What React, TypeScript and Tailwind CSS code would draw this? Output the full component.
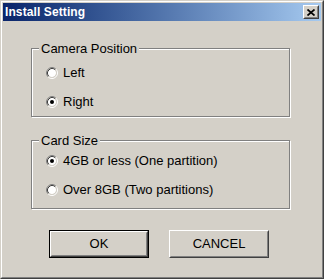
import React, { useState } from 'react';

const Radio: React.FC<{ checked: boolean }> = ({ checked }) => (
  <svg width="12" height="12" viewBox="0 0 12 12" className="shrink-0">
    <circle cx="6" cy="6" r="4" fill="#ffffff" />
    <path d="M2.11 9.89 A5.5 5.5 0 0 1 9.89 2.11" fill="none" stroke="#808080" strokeWidth="1" />
    <path d="M9.89 2.11 A5.5 5.5 0 0 1 2.11 9.89" fill="none" stroke="#ffffff" strokeWidth="1" />
    <path d="M2.82 9.18 A4.5 4.5 0 0 1 9.18 2.82" fill="none" stroke="#404040" strokeWidth="1" />
    <path d="M9.18 2.82 A4.5 4.5 0 0 1 2.82 9.18" fill="none" stroke="#d4d0c8" strokeWidth="1" />
    {checked && <circle cx="6" cy="6" r="2" fill="#000000" />}
  </svg>
);

const Option: React.FC<{ label: string; checked: boolean; onClick: () => void }> = ({ label, checked, onClick }) => (
  <div className="flex items-center h-[16px] pl-[14px] gap-[5px] cursor-default" onClick={onClick}>
    <Radio checked={checked} />
    <span className="leading-[16px]">{label}</span>
  </div>
);

const GroupBox: React.FC<{ title: string; rowTop: string; className?: string; children: React.ReactNode }> = ({ title, rowTop, className, children }) => (
  <div className={`w-[259px] h-[69px] ml-[28px] border border-[#808080] shadow-[inset_1px_1px_0_#ffffff,1px_1px_0_#ffffff] flex flex-col ${className ?? ''}`}>
    <span className="self-start -mt-[8px] ml-[7px] px-[2px] bg-[#d4d0c8] leading-[15px] h-[15px]">{title}</span>
    <div className={`flex flex-col gap-[13px] ${rowTop}`}>{children}</div>
  </div>
);

const PushButton: React.FC<{ label: string; isDefault?: boolean }> = ({ label, isDefault }) => (
  <button
    className={`w-[100px] h-[28px] p-0 ${isDefault ? 'border border-black' : ''} bg-[#d4d0c8]`}
  >
    <span className="block w-full h-full border border-t-white border-l-white border-r-[#404040] border-b-[#404040]">
      <span className="flex items-center justify-center w-full h-full border border-t-[#d4d0c8] border-l-[#d4d0c8] border-r-[#808080] border-b-[#808080] text-[13px] text-black">
        {label}
      </span>
    </span>
  </button>
);

export default function App() {
  const [position, setPosition] = useState<'left' | 'right'>('right');
  const [card, setCard] = useState<'one' | 'two'>('one');

  return (
    <div className="w-[324px] h-[279px] bg-[#d4d0c8] font-['Liberation_Sans',Arial,sans-serif] text-[13px] text-black select-none">
      <div className="w-full h-full border border-t-[#d4d0c8] border-l-[#d4d0c8] border-r-[#404040] border-b-[#404040]">
        <div className="w-full h-full border border-t-white border-l-white border-r-[#808080] border-b-[#808080] p-[1px] flex flex-col">
          {/* Title bar */}
          <div className="h-[18px] flex items-center bg-gradient-to-r from-[#0a246a] to-[#a6caf0] shrink-0">
            <span className="pl-[2px] text-white font-bold text-[12px] leading-[18px] tracking-[0.1px]">Install Setting</span>
            <span className="ml-auto mr-[2px] w-[16px] h-[14px] bg-[#d4d0c8] border border-t-white border-l-white border-r-[#404040] border-b-[#404040]">
              <span className="flex items-center justify-center w-full h-full border border-t-[#d4d0c8] border-l-[#d4d0c8] border-r-[#808080] border-b-[#808080]">
                <svg width="8" height="7" viewBox="0 0 8 7">
                  <path d="M0.5 0.5 L7.5 6.5 M7.5 0.5 L0.5 6.5" stroke="#000" strokeWidth="1.7" fill="none" />
                </svg>
              </span>
            </span>
          </div>

          {/* Body */}
          <div className="flex flex-col pt-[27px]">
            <GroupBox title="Camera Position" rowTop="mt-[9px]">
              <Option label="Left" checked={position === 'left'} onClick={() => setPosition('left')} />
              <Option label="Right" checked={position === 'right'} onClick={() => setPosition('right')} />
            </GroupBox>

            <GroupBox title="Card Size" rowTop="mt-[5px]" className="mt-[23px]">
              <Option label="4GB or less (One partition)" checked={card === 'one'} onClick={() => setCard('one')} />
              <Option label="Over 8GB (Two partitions)" checked={card === 'two'} onClick={() => setCard('two')} />
            </GroupBox>

            <div className="flex gap-[20px] ml-[46px] mt-[21px]">
              <PushButton label="OK" isDefault />
              <PushButton label="CANCEL" />
            </div>
          </div>
        </div>
      </div>
    </div>
  );
}
